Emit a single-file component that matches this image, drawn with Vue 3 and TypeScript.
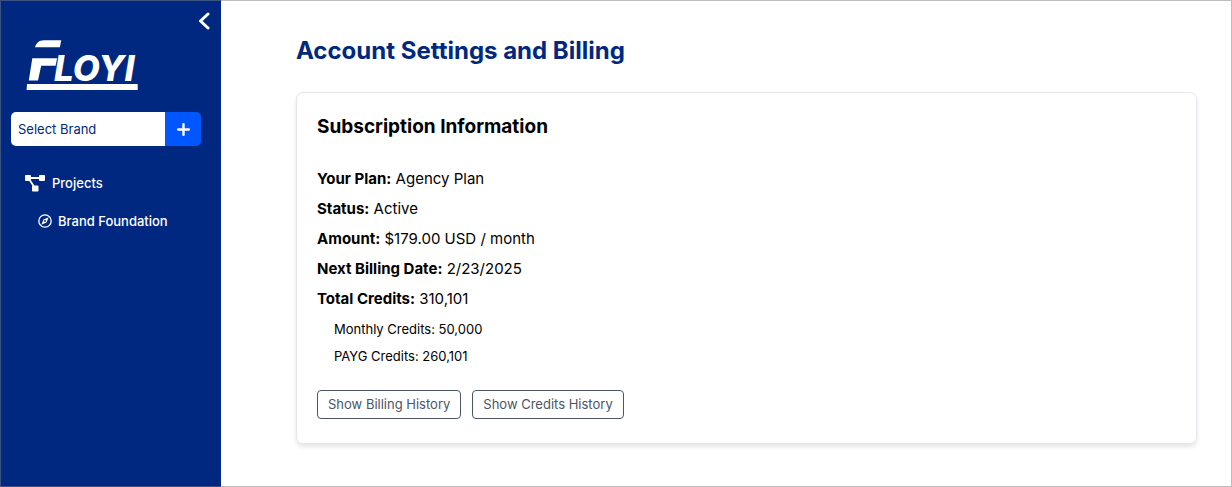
<script setup lang="ts">
import { ref } from 'vue'

interface Detail {
  label: string
  value: string
}

const brand = ref('')

const details: Detail[] = [
  { label: 'Your Plan:', value: 'Agency Plan' },
  { label: 'Status:', value: 'Active' },
  { label: 'Amount:', value: '$179.00 USD / month' },
  { label: 'Next Billing Date:', value: '2/23/2025' },
  { label: 'Total Credits:', value: '310,101' },
]

const credits: Detail[] = [
  { label: 'Monthly Credits:', value: '50,000' },
  { label: 'PAYG Credits:', value: '260,101' },
]
</script>

<template>
  <div class="shell">
    <aside class="sidebar">
      <button class="collapse" type="button" aria-label="Collapse sidebar">
        <svg width="12" height="18" viewBox="0 0 12 18" aria-hidden="true">
          <path d="M10 2 2.500 9l7.500 7" fill="none" stroke="#fff" stroke-width="3" stroke-linecap="round" stroke-linejoin="round" />
        </svg>
      </button>

      <a class="logo" href="#" aria-label="Floyi home">
        <svg width="114" height="52" viewBox="26 39 114 52" fill="#fff">
          <path d="M35 47.300C36 43 39 40.200 44 40.200h17.300l-1.400 7.100z" />
          <path d="M32.300 58.300h24.800l-1.500 7.400H41.200L38 80.600h-9.200z" />
          <text class="wordmark" x="54" y="80.600">LOYI</text>
          <path d="M27 84h110.700v6H26.600z" />
        </svg>
      </a>

      <div class="brand">
        <select v-model="brand" class="brand-select" aria-label="Brand">
          <option value="">Select Brand</option>
        </select>
        <button class="brand-add" type="button" aria-label="Add brand">
          <svg width="13" height="13" viewBox="0 0 13 13" aria-hidden="true">
            <path d="M6.500 1.200v10.600M1.200 6.500h10.600" stroke="#fff" stroke-width="2.400" stroke-linecap="round" />
          </svg>
        </button>
      </div>

      <nav class="nav">
        <a class="nav-item" href="#">
          <svg width="20" height="17" viewBox="0 0 20 17" fill="#fff" aria-hidden="true">
            <path d="M3 3h14M4 4l6 9" fill="none" stroke="#fff" stroke-width="1.800" />
            <rect x="0" y="0" width="6" height="6" rx="1" />
            <rect x="14" y="0" width="6" height="6" rx="1" />
            <rect x="7" y="10.500" width="6.500" height="6" rx="1" />
          </svg>
          <span>Projects</span>
        </a>
        <a class="nav-item nav-child" href="#">
          <svg width="14" height="14" viewBox="0 0 14 14" aria-hidden="true">
            <circle cx="7" cy="7" r="6.200" fill="none" stroke="#fff" stroke-width="1.300" />
            <path fill="#fff" fill-rule="evenodd" d="M10.700 3.300 8.500 8.500 3.300 10.700 5.500 5.500zM7 6.100a.9.900 0 1 0 0 1.800.9.900 0 0 0 0-1.800z" />
          </svg>
          <span>Brand Foundation</span>
        </a>
      </nav>
    </aside>

    <main class="content">
      <h1 class="title">Account Settings and Billing</h1>
      <section class="card">
        <h2 class="card-title">Subscription Information</h2>
        <p v-for="item in details" :key="item.label" class="detail">
          <strong>{{ item.label }}</strong> {{ item.value }}
        </p>
        <div class="credits">
          <p v-for="item in credits" :key="item.label" class="credit">{{ item.label }} {{ item.value }}</p>
        </div>
        <div class="actions">
          <button class="action" type="button">Show Billing History</button>
          <button class="action" type="button">Show Credits History</button>
        </div>
      </section>
    </main>
  </div>
</template>

<style>
body {
  margin: 0;
  background: #fff;
}
</style>

<style scoped>
.shell {
  position: relative;
  display: flex;
  min-height: 100vh;
  font-family: Inter, "Liberation Sans", sans-serif;
  color: #000;
}
.shell::after {
  content: "";
  position: absolute;
  inset: 0;
  border: 1px solid rgba(120, 124, 130, 0.5);
  pointer-events: none;
}
.shell *,
.shell::after {
  box-sizing: border-box;
}
.sidebar {
  display: flex;
  flex-direction: column;
  flex: 0 0 221px;
  padding: 12px 11px 0 11px;
  background: #002880;
}
button {
  font-family: inherit;
  cursor: pointer;
}
.collapse {
  align-self: flex-end;
  display: flex;
  padding: 0;
  border: 0;
  background: none;
}
.logo {
  margin: 9px 0 0 15px;
  height: 52px;
}
.logo svg {
  display: block;
}
.wordmark {
  font: italic 800 35px Inter, "Liberation Sans", sans-serif;
}
.brand {
  display: flex;
  height: 34px;
  margin: 21px 9px 0 0;
}
.brand-select {
  flex: 1;
  min-width: 0;
  padding: 0 7px;
  border: 0;
  border-radius: 5px 0 0 5px;
  appearance: none;
  background: #fff;
  color: #002880;
  font: 13px Inter, "Liberation Sans", sans-serif;
}
.brand-add {
  display: flex;
  align-items: center;
  justify-content: center;
  width: 36px;
  padding: 0;
  border: 0;
  border-radius: 0 5px 5px 0;
  background: #0057ff;
}
.nav {
  display: flex;
  flex-direction: column;
  gap: 18px;
  margin: 27px 0 0 14px;
}
.nav-item {
  display: flex;
  align-items: center;
  gap: 7px;
  color: #fff;
  font-size: 13px;
  font-weight: 500;
  line-height: 20px;
  text-decoration: none;
}
.nav-child {
  gap: 6px;
  padding-left: 13px;
}
.content {
  flex: 1;
  min-width: 0;
  padding: 34px 35px 42px 75px;
}
.title {
  margin: 0;
  color: #002880;
  font-size: 24px;
  font-weight: 700;
  line-height: 34px;
}
.card {
  margin-top: 24px;
  padding: 20px 20px 24px;
  border: 1px solid #e5e7eb;
  border-radius: 7px;
  box-shadow: 0 3px 4px rgba(0, 0, 0, 0.1);
}
.card-title {
  margin: 0 0 26px;
  font-size: 19px;
  font-weight: 700;
  line-height: 28px;
}
.detail {
  margin: 0 0 6px;
  font-size: 15px;
  line-height: 24px;
}
.detail strong {
  font-weight: 700;
}
.credits {
  margin-top: 8px;
  padding-left: 17px;
}
.credit {
  margin: 0 0 7px;
  font-size: 13px;
  line-height: 20px;
}
.actions {
  display: flex;
  flex-wrap: wrap;
  gap: 11px;
  margin-top: 24px;
}
.action {
  padding: 4px 10px;
  border: 1px solid #4a5568;
  border-radius: 4px;
  background: #fff;
  color: #4a5568;
  font-size: 13px;
  line-height: 19px;
}
</style>
